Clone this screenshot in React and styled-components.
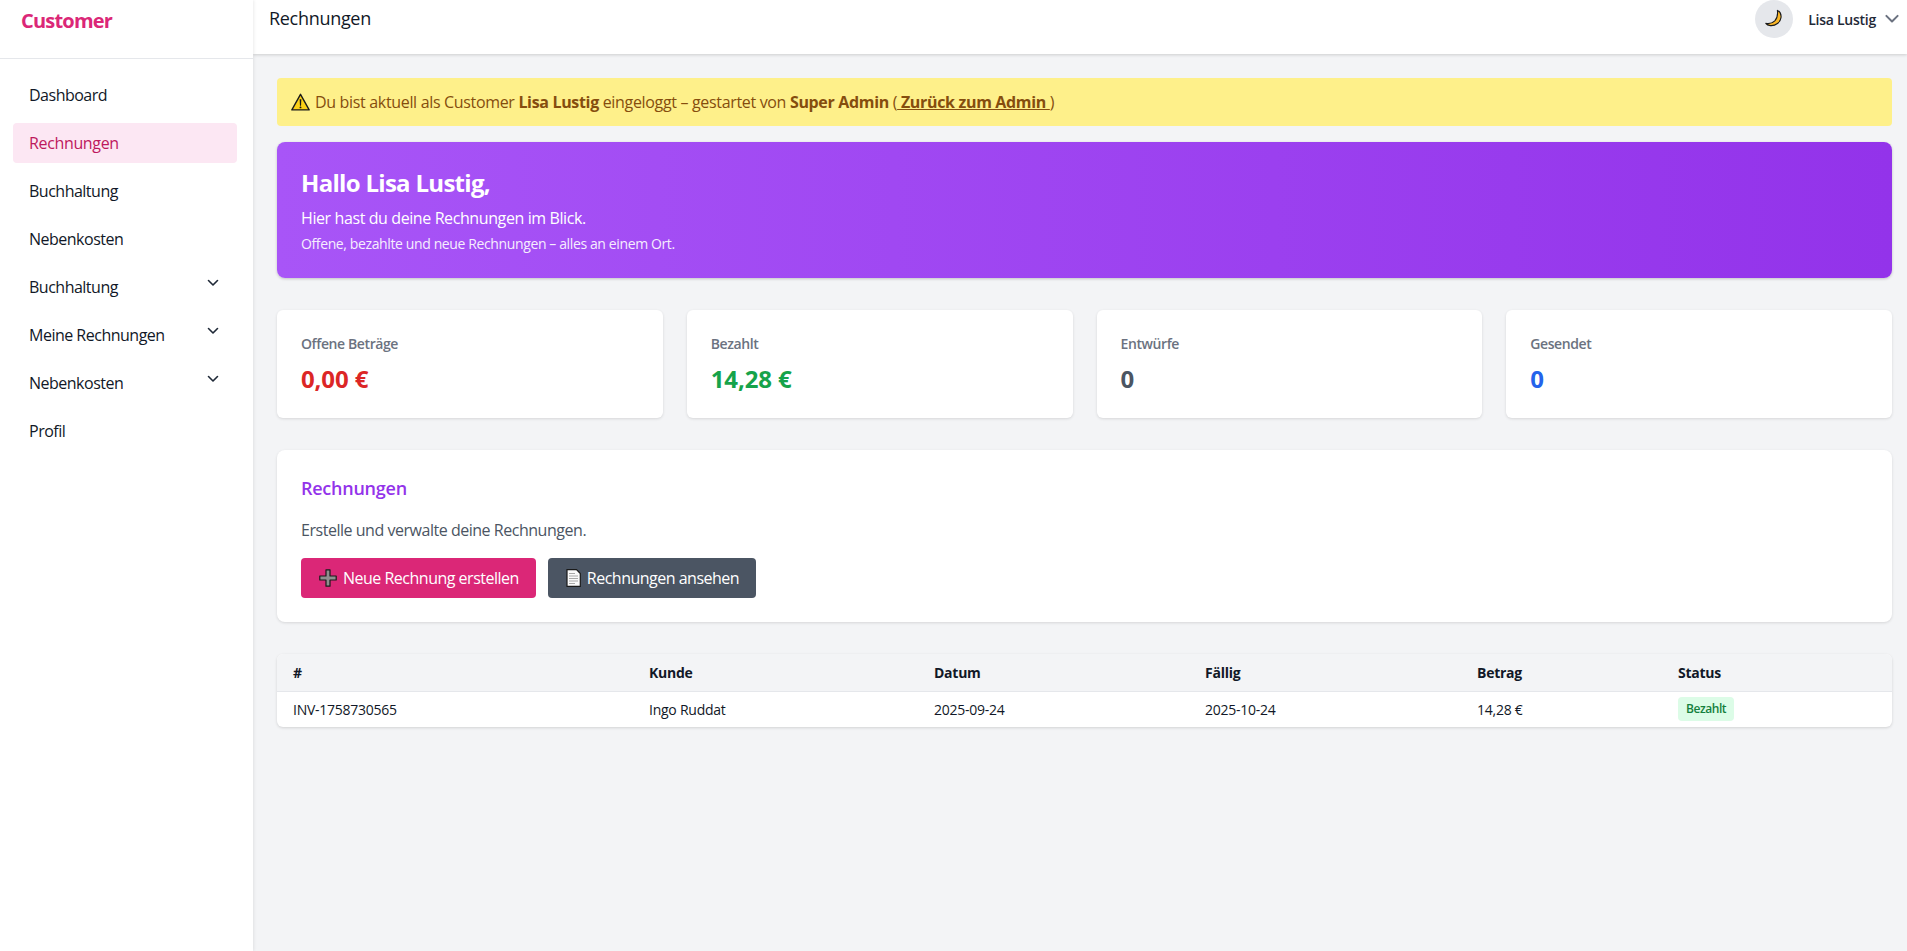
import React from 'react';
import styled, { createGlobalStyle } from 'styled-components';

const GlobalStyle = createGlobalStyle`
  * {
    box-sizing: border-box;
  }
  html,
  body {
    margin: 0;
    padding: 0;
    height: 100%;
  }
  body {
    background: #f3f4f6;
    color: #111827;
    font-family: 'Open Sans', 'Noto Sans', Arial, sans-serif;
    font-size: 16px;
    letter-spacing: -0.25px;
  }
`;

const Shell = styled.div`
  display: flex;
  height: 951px;
  overflow: hidden;
`;

const Sidebar = styled.aside`
  width: 253px;
  flex-shrink: 0;
  background: #fff;
  box-shadow: 1px 0 3px rgba(0, 0, 0, 0.08);
  z-index: 2;
`;

const Brand = styled.div`
  height: 59px;
  padding: 7px 21px 0;
  border-bottom: 1px solid #e5e7eb;
  color: #db2777;
  font-size: 20px;
  font-weight: 700;
  letter-spacing: -0.8px;
  line-height: 28px;
`;

const Nav = styled.nav`
  display: flex;
  flex-direction: column;
  gap: 8px;
  padding: 16px 16px 0 13px;
`;

const NavItem = styled.a`
  display: flex;
  align-items: center;
  justify-content: space-between;
  height: 40px;
  padding: 0 16px;
  border-radius: 4px;
  background: ${(p) => (p.$active ? '#fce7f3' : 'transparent')};
  color: ${(p) => (p.$active ? '#be185d' : '#111827')};
  font-weight: ${(p) => (p.$active ? 500 : 400)};
  letter-spacing: ${(p) => (p.$active ? '-0.35px' : '-0.5px')};
  svg {
    margin-top: -8px;
  }
`;

const Main = styled.div`
  flex: 1;
  min-width: 0;
  display: flex;
  flex-direction: column;
`;

const Topbar = styled.header`
  height: 54px;
  flex-shrink: 0;
  display: flex;
  justify-content: space-between;
  padding: 0 5px 0 16px;
  background: #fff;
  box-shadow: 0 1px 3px rgba(0, 0, 0, 0.16);
  z-index: 1;
`;

const PageTitle = styled.h1`
  margin: 4px 0 0;
  font-size: 18px;
  font-weight: 500;
  letter-spacing: -0.3px;
  line-height: 28px;
`;

const UserArea = styled.div`
  display: flex;
  align-items: center;
  height: 38px;
`;

const ThemeButton = styled.span`
  display: flex;
  align-items: center;
  justify-content: center;
  width: 38px;
  height: 38px;
  border-radius: 50%;
  background: #e5e7eb;
`;

const UserName = styled.span`
  margin: 0 6px 0 15px;
  color: #1f2937;
  font-size: 14px;
  font-weight: 600;
`;

const Content = styled.main`
  display: flex;
  flex-direction: column;
  padding: 24px 15px 0 24px;
`;

const Notice = styled.div`
  display: flex;
  align-items: center;
  height: 48px;
  padding: 0 14px;
  border-radius: 4px;
  background: #fef08a;
  color: #854d0e;
  letter-spacing: -0.33px;
  svg {
    margin-right: 5px;
  }
  strong {
    font-weight: 700;
  }
  a {
    font-weight: 700;
    text-decoration: underline;
  }
  p {
    margin: 0;
    white-space: pre-wrap;
  }
`;

const Hero = styled.section`
  height: 136px;
  margin-top: 16px;
  padding: 25px 24px 0;
  border-radius: 8px;
  background: linear-gradient(to right, #a855f7, #9333ea);
  box-shadow: 0 1px 3px rgba(0, 0, 0, 0.2);
  color: #fff;
  h2 {
    margin: 0;
    font-size: 24px;
    font-weight: 700;
    letter-spacing: -0.7px;
    line-height: 32px;
  }
  p {
    margin: 7px 0 0;
    letter-spacing: -0.4px;
    line-height: 24px;
  }
  small {
    display: block;
    margin-top: 4px;
    font-size: 14px;
    letter-spacing: -0.38px;
    line-height: 20px;
    opacity: 0.9;
  }
`;

const Stats = styled.section`
  display: grid;
  grid-template-columns: repeat(4, 1fr);
  gap: 24px;
  margin-top: 32px;
`;

const StatCard = styled.div`
  height: 108px;
  padding: 24px;
  border-radius: 6px;
  background: #fff;
  box-shadow: 0 1px 3px rgba(0, 0, 0, 0.12);
`;

const StatLabel = styled.div`
  color: #6b7280;
  font-size: 14px;
  font-weight: 600;
  letter-spacing: -0.4px;
  line-height: 20px;
`;

const StatValue = styled.div`
  margin-top: 9px;
  color: ${(p) => p.$color};
  font-size: 24px;
  font-weight: 700;
  letter-spacing: -0.1px;
  line-height: 32px;
`;

const Panel = styled.section`
  height: 172px;
  margin-top: 32px;
  padding: 24px;
  border-radius: 8px;
  background: #fff;
  box-shadow: 0 1px 3px rgba(0, 0, 0, 0.12);
  h3 {
    margin: 0;
    color: #9333ea;
    font-size: 18px;
    font-weight: 600;
    line-height: 28px;
  }
  p {
    margin: 16px 0 0;
    color: #4b5563;
    letter-spacing: -0.47px;
    line-height: 24px;
  }
`;

const Actions = styled.div`
  display: flex;
  gap: 12px;
  margin-top: 16px;
`;

const ActionButton = styled.button`
  display: flex;
  align-items: center;
  gap: 6px;
  height: 40px;
  padding: 0 17px 0 18px;
  border: 0;
  border-radius: 4px;
  background: ${(p) => p.$bg};
  color: #fff;
  font: inherit;
  letter-spacing: -0.5px;
`;

const TableCard = styled.div`
  margin-top: 32px;
  border-radius: 6px;
  overflow: hidden;
  box-shadow: 0 1px 3px rgba(0, 0, 0, 0.14);
  background: #fff;
`;

const Table = styled.table`
  width: 100%;
  table-layout: fixed;
  border-collapse: collapse;
  font-size: 14px;
  th {
    height: 37px;
    padding: 0 16px;
    background: #f3f4f6;
    border-bottom: 1px solid #e5e7eb;
    text-align: left;
    font-weight: 700;
  }
  td {
    height: 36px;
    padding: 0 16px;
  }
`;

const Badge = styled.span`
  display: inline-block;
  padding: 0 8px;
  border-radius: 4px;
  background: #dcfce7;
  color: #15803d;
  font-size: 12px;
  font-weight: 600;
  letter-spacing: -0.45px;
  line-height: 24px;
`;

const Chevron = ({ size = 16, color = '#1f2937' }) => (
  <svg width={size} height={size} viewBox="0 0 16 16" fill="none" stroke={color} strokeWidth="1.6" strokeLinecap="round" strokeLinejoin="round">
    <path d="M3.5 5.5 8 10l4.5-4.5" />
  </svg>
);

const WarningIcon = () => (
  <svg width="19" height="18" viewBox="0 0 18 17">
    <path d="M9 1.200 17.200 16H.8z" fill="#fcd116" stroke="#1a1a1a" strokeWidth="1.300" strokeLinejoin="round" />
    <path d="M8.200 6h1.600l-.3 6h-1z" fill="#1a1a1a" />
    <circle cx="9" cy="13.600" r="0.9" fill="#1a1a1a" />
  </svg>
);

const MoonIcon = () => (
  <svg width="20" height="20" viewBox="0 0 20 20">
    <path d="M13.400 1.400c2.600 1.200 4 4 3.600 7.200-.6 4.800-5.400 8.400-10.600 8-2-.2-3.800-1-4.600-2.200 3.200.6 6.600-.2 9-2.600 2.200-2.400 3.200-6 2.600-10.400z" fill="#fbb726" stroke="#1a1a1a" strokeWidth="1.100" strokeLinejoin="round" />
  </svg>
);

const PlusIcon = () => (
  <svg width="18" height="18" viewBox="0 0 18 18">
    <path d="M7 .8h4v6.200h6.200v4H11v6.200H7V11H.8V7H7z" fill="#8f8f8f" stroke="#1a1a1a" strokeWidth="1.200" strokeLinejoin="round" />
  </svg>
);

const PageIcon = () => (
  <svg width="15" height="18" viewBox="0 0 15 18">
    <path d="M1 .7h9.500L14.300 4.500v12.800H1z" fill="#fafafa" stroke="#1a1a1a" strokeWidth="1.200" />
    <path d="M3 4.500h6M3 7h9M3 9.500h9M3 12h9M3 14.500h6" stroke="#a8a8a8" strokeWidth="1" />
  </svg>
);

const navItems = [
  { label: 'Dashboard' },
  { label: 'Rechnungen', active: true },
  { label: 'Buchhaltung' },
  { label: 'Nebenkosten' },
  { label: 'Buchhaltung', sub: true },
  { label: 'Meine Rechnungen', sub: true },
  { label: 'Nebenkosten', sub: true },
  { label: 'Profil' },
];

const stats = [
  { label: 'Offene Beträge', value: '0,00 €', color: '#dc2626' },
  { label: 'Bezahlt', value: '14,28 €', color: '#16a34a' },
  { label: 'Entwürfe', value: '0', color: '#4b5563' },
  { label: 'Gesendet', value: '0', color: '#2563eb' },
];

const columns = [
  ['#', 356],
  ['Kunde', 285],
  ['Datum', 271],
  ['Fällig', 272],
  ['Betrag', 201],
  ['Status', 230],
];

export default function App() {
  return (
    <>
      <GlobalStyle />
      <Shell>
        <Sidebar>
          <Brand>Customer</Brand>
          <Nav>
            {navItems.map((item, i) => (
              <NavItem key={i} $active={item.active}>
                {item.label}
                {item.sub && <Chevron />}
              </NavItem>
            ))}
          </Nav>
        </Sidebar>
        <Main>
          <Topbar>
            <PageTitle>Rechnungen</PageTitle>
            <UserArea>
              <ThemeButton>
                <MoonIcon />
              </ThemeButton>
              <UserName>Lisa Lustig</UserName>
              <Chevron size={20} color="#6b7280" />
            </UserArea>
          </Topbar>
          <Content>
            <Notice>
              <WarningIcon />
              <p>
                Du bist aktuell als Customer <strong>Lisa Lustig</strong> eingeloggt – gestartet von{' '}
                <strong>Super Admin</strong> (<a> Zurück zum Admin </a>)
              </p>
            </Notice>
            <Hero>
              <h2>Hallo Lisa Lustig,</h2>
              <p>Hier hast du deine Rechnungen im Blick.</p>
              <small>Offene, bezahlte und neue Rechnungen – alles an einem Ort.</small>
            </Hero>
            <Stats>
              {stats.map((s) => (
                <StatCard key={s.label}>
                  <StatLabel>{s.label}</StatLabel>
                  <StatValue $color={s.color}>{s.value}</StatValue>
                </StatCard>
              ))}
            </Stats>
            <Panel>
              <h3>Rechnungen</h3>
              <p>Erstelle und verwalte deine Rechnungen.</p>
              <Actions>
                <ActionButton $bg="#db2777">
                  <PlusIcon />
                  Neue Rechnung erstellen
                </ActionButton>
                <ActionButton $bg="#4b5563">
                  <PageIcon />
                  Rechnungen ansehen
                </ActionButton>
              </Actions>
            </Panel>
            <TableCard>
              <Table>
                <colgroup>
                  {columns.map(([name, width]) => (
                    <col key={name} width={width} />
                  ))}
                </colgroup>
                <thead>
                  <tr>
                    {columns.map(([name]) => (
                      <th key={name}>{name}</th>
                    ))}
                  </tr>
                </thead>
                <tbody>
                  <tr>
                    <td>INV-1758730565</td>
                    <td>Ingo Ruddat</td>
                    <td>2025-09-24</td>
                    <td>2025-10-24</td>
                    <td>14,28 €</td>
                    <td>
                      <Badge>Bezahlt</Badge>
                    </td>
                  </tr>
                </tbody>
              </Table>
            </TableCard>
          </Content>
        </Main>
      </Shell>
    </>
  );
}
